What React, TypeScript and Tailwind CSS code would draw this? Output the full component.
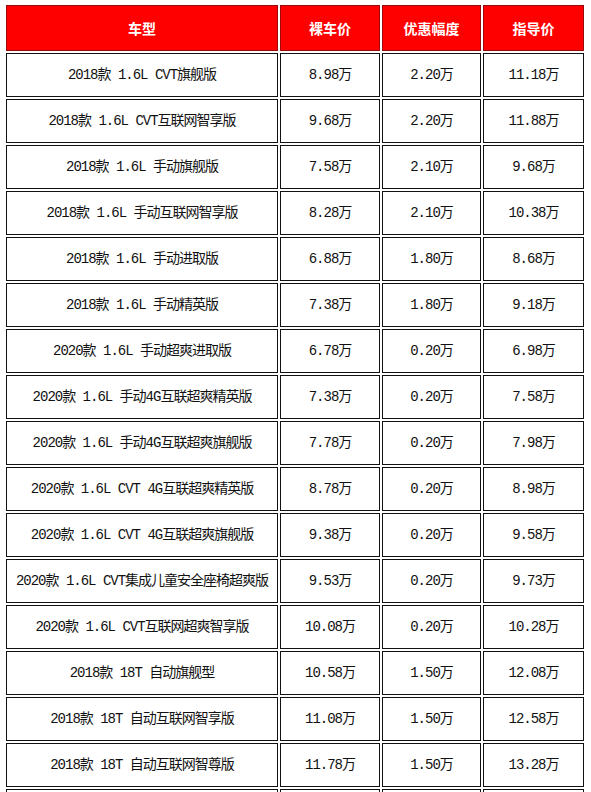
const rows = [
  ['2018款 1.6L CVT旗舰版', '8.98万', '2.20万', '11.18万'],
  ['2018款 1.6L CVT互联网智享版', '9.68万', '2.20万', '11.88万'],
  ['2018款 1.6L 手动旗舰版', '7.58万', '2.10万', '9.68万'],
  ['2018款 1.6L 手动互联网智享版', '8.28万', '2.10万', '10.38万'],
  ['2018款 1.6L 手动进取版', '6.88万', '1.80万', '8.68万'],
  ['2018款 1.6L 手动精英版', '7.38万', '1.80万', '9.18万'],
  ['2020款 1.6L 手动超爽进取版', '6.78万', '0.20万', '6.98万'],
  ['2020款 1.6L 手动4G互联超爽精英版', '7.38万', '0.20万', '7.58万'],
  ['2020款 1.6L 手动4G互联超爽旗舰版', '7.78万', '0.20万', '7.98万'],
  ['2020款 1.6L CVT 4G互联超爽精英版', '8.78万', '0.20万', '8.98万'],
  ['2020款 1.6L CVT 4G互联超爽旗舰版', '9.38万', '0.20万', '9.58万'],
  ['2020款 1.6L CVT集成儿童安全座椅超爽版', '9.53万', '0.20万', '9.73万'],
  ['2020款 1.6L CVT互联网超爽智享版', '10.08万', '0.20万', '10.28万'],
  ['2018款 18T 自动旗舰型', '10.58万', '1.50万', '12.08万'],
  ['2018款 18T 自动互联网智享版', '11.08万', '1.50万', '12.58万'],
  ['2018款 18T 自动互联网智尊版', '11.78万', '1.50万', '13.28万'],
]

const headers = [
  { label: '车型', w: 'w-[272px]' },
  { label: '裸车价', w: 'w-[100px]' },
  { label: '优惠幅度', w: 'w-[99px]' },
  { label: '指导价', w: 'w-[101px]' },
]

export default function App() {
  return (
    <div className="bg-white min-h-screen pl-[4px] pt-[3px] overflow-hidden">
      <table className="border-separate border-spacing-[2px] w-[582px] table-fixed">
        <thead>
          <tr>
            {headers.map((h) => (
              <th
                key={h.label}
                className={`${h.w} h-[46px] p-0 bg-[#ff0000] border border-[#9b0a0a] text-white text-[14px] font-bold text-center [font-family:'Noto_Sans_CJK_SC',sans-serif]`}
              >
                {h.label}
              </th>
            ))}
          </tr>
        </thead>
        <tbody>
          {rows.map((r) => (
            <tr key={r[0]}>
              {r.map((c, i) => (
                <td
                  key={i}
                  className="h-[44px] p-0 border border-[#111] text-center text-[14px] text-[#111] tracking-[-1px] whitespace-nowrap [font-family:'Liberation_Mono','Noto_Sans_CJK_SC',monospace]"
                >
                  {c}
                </td>
              ))}
            </tr>
          ))}
          <tr>
            {[0, 1, 2, 3].map((i) => (
              <td key={i} className="h-[44px] p-0 border border-[#111]" />
            ))}
          </tr>
        </tbody>
      </table>
    </div>
  )
}
